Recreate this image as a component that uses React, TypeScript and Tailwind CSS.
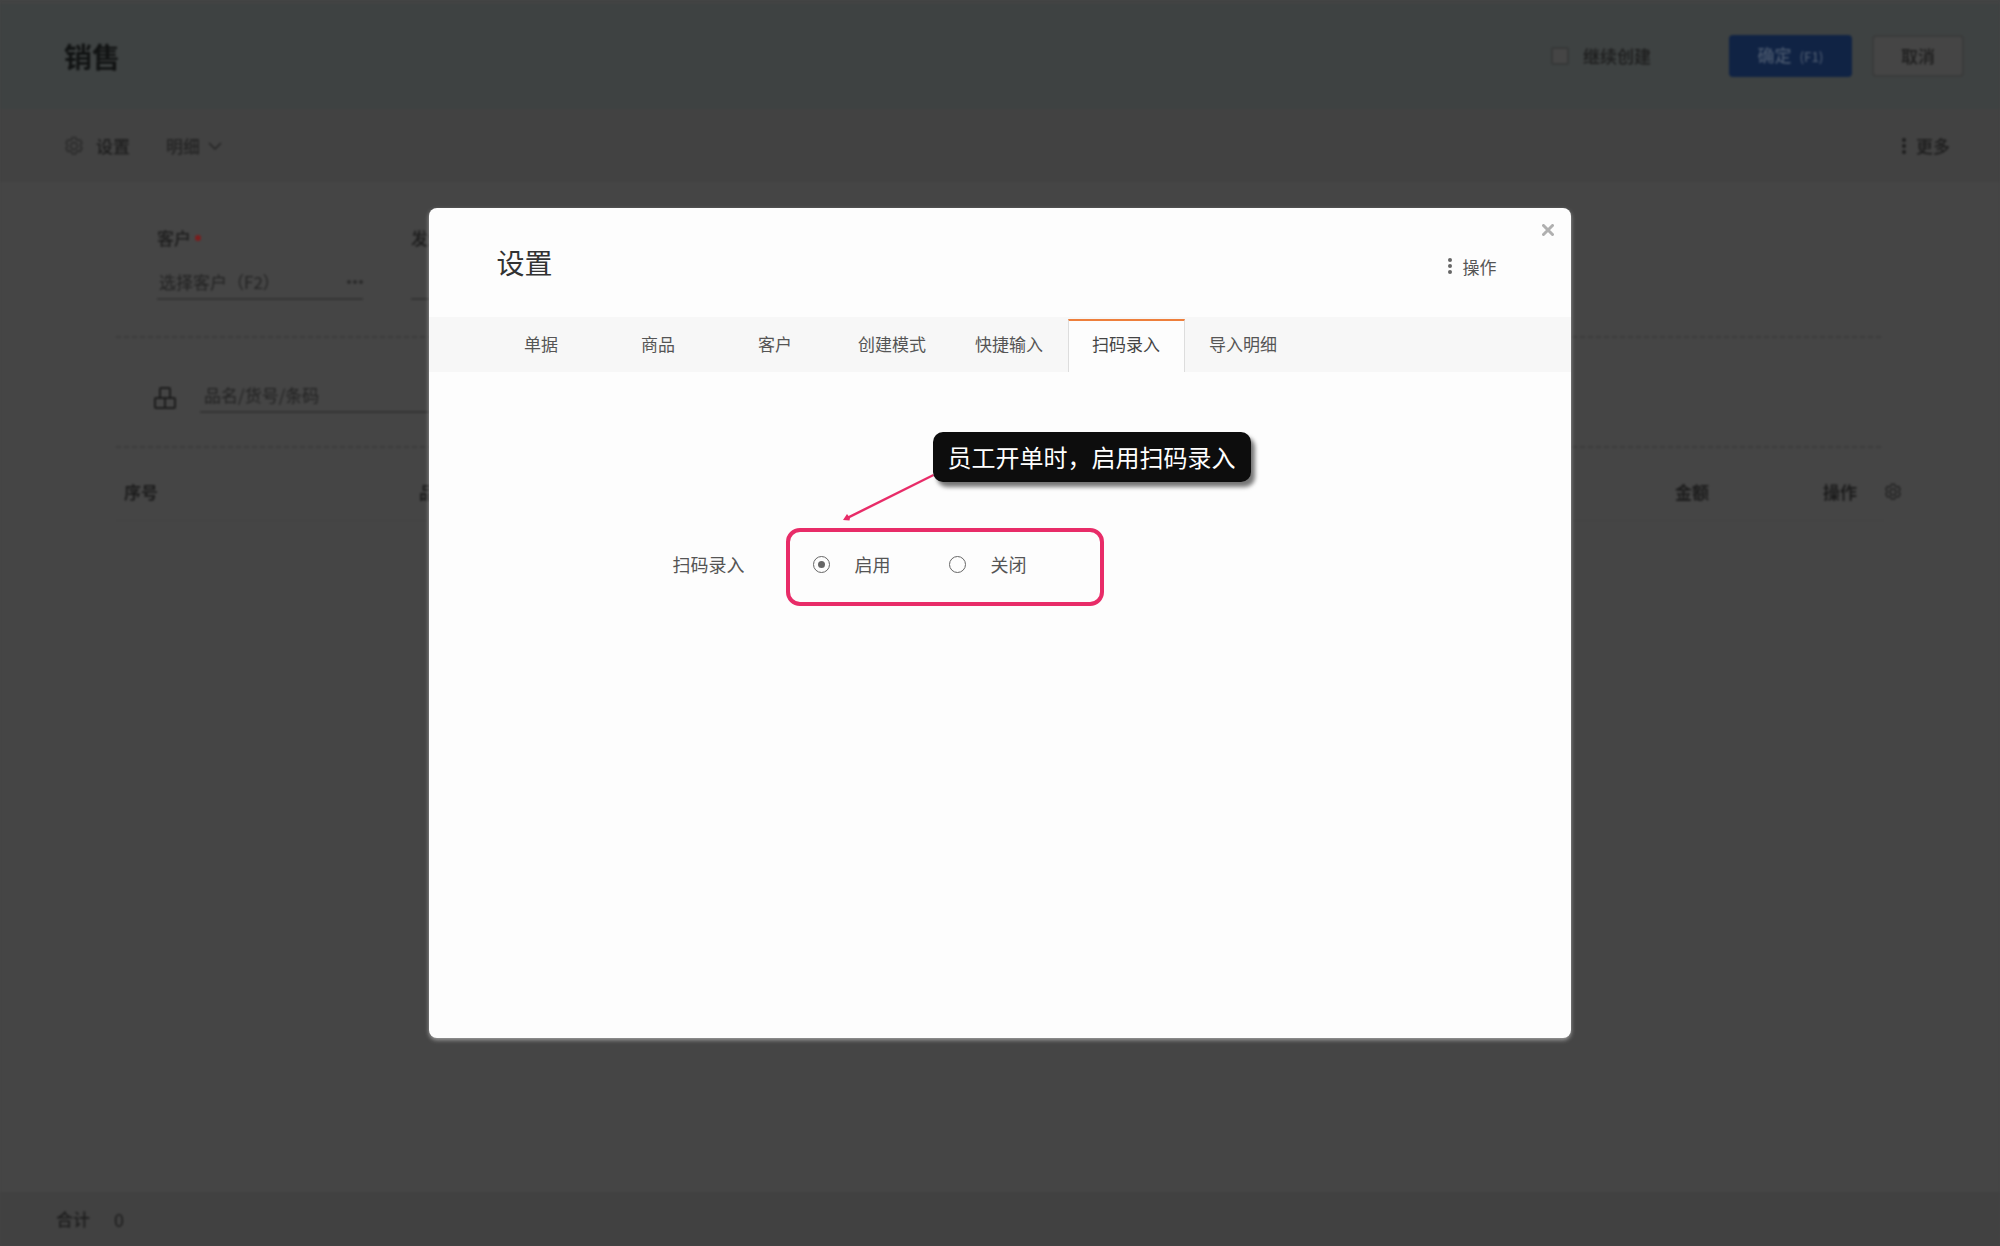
import { useState } from "react";

const tabs = ["单据", "商品", "客户", "创建模式", "快捷输入", "扫码录入", "导入明细"];

function Gear({ className }: { className: string }) {
  return (
    <svg viewBox="0 0 24 24" className={className} fill="none" stroke="currentColor" strokeWidth="2" aria-hidden="true">
      <circle cx="12" cy="12" r="4" />
      <path d="M9.8 1.8h4.4l.8 2.6 1.8 1 2.6-.8 2.2 3.6-1.8 2v2.6l1.8 2-2.2 3.8-2.6-.8-1.8 1-.8 2.6H9.8l-.8-2.6-1.8-1-2.600.8-2.200-3.800 1.800-2v-2.600l-1.800-2 2.200-3.600 2.600.8 1.800-1z" strokeLinejoin="round" />
    </svg>
  );
}

function Dots({ className }: { className: string }) {
  return (
    <svg viewBox="0 0 4 16" className={className} fill="currentColor" aria-hidden="true">
      <circle cx="2" cy="2" r="2" />
      <circle cx="2" cy="8" r="2" />
      <circle cx="2" cy="14" r="2" />
    </svg>
  );
}

function DashedRule() {
  return (
    <svg className="block h-[2px] w-full" aria-hidden="true">
      <line x1="0" y1="1" x2="100%" y2="1" stroke="#3c3c3c" strokeWidth="2" strokeDasharray="5 3" />
    </svg>
  );
}

function SalesPage() {
  return (
    <div className="flex h-full flex-col text-[17px] leading-6 text-[#1c1c1c] blur-[1px]" inert>
      <header className="flex h-[109px] shrink-0 items-center border-t-4 border-[#424343] bg-[#3e4242] pr-9 pb-[2px] pl-16">
        <h1 className="text-[28px] leading-10 font-bold text-[#111313]">销售</h1>
        <label className="ml-auto flex items-center gap-[14px] font-medium">
          <input type="checkbox" className="size-[18px] appearance-none rounded-xs border-2 border-[#363838] bg-[#454545]" />
          继续创建
        </label>
        <button type="button" className="ml-[78px] h-[42px] w-[123px] rounded bg-[#102344] font-medium text-[#4a586e]">
          确定 <span className="pl-1 text-[13px]">(F1)</span>
        </button>
        <button type="button" className="ml-5 h-[42px] w-[92px] rounded border-2 border-[#3a3b3b] bg-[#454545] font-medium">
          取消
        </button>
      </header>
      <nav className="flex h-[73px] shrink-0 items-center bg-[#424242] pr-[50px] pl-16">
        <button type="button" className="flex items-center gap-3 font-medium">
          <Gear className="size-5 text-[#2c2c2c]" />
          设置
        </button>
        <button type="button" className="ml-9 flex items-center gap-2 font-medium text-[#242424]">
          明细
          <svg viewBox="0 0 14 8" className="w-[14px]" fill="none" stroke="currentColor" strokeWidth="1.5" aria-hidden="true">
            <path d="M1 1l6 6 6-6" />
          </svg>
        </button>
        <button type="button" className="ml-auto flex items-center gap-[10px] font-medium">
          <Dots className="h-4" />
          更多
        </button>
      </nav>
      <main className="flex-1 bg-[#454545] px-[116px]">
        <div className="flex gap-12 px-[41px] pt-[44px]">
          <div className="w-[206px]">
            <label htmlFor="customer" className="flex items-center gap-1 font-medium">
              客户<i className="size-[6px] rounded-full bg-[#7c1c1c]" />
            </label>
            <div className="mt-5 flex items-center border-b-2 border-[#343434] pb-1">
              <input id="customer" placeholder="选择客户（F2）" className="min-w-0 flex-1 px-[2px] placeholder:text-[#222]" />
              <button type="button" aria-label="选择客户" className="flex gap-[2px]">
                <i className="size-1 rounded-full bg-[#2a2a2a]" />
                <i className="size-1 rounded-full bg-[#2a2a2a]" />
                <i className="size-1 rounded-full bg-[#2a2a2a]" />
              </button>
            </div>
          </div>
          <div className="w-[206px]">
            <label htmlFor="date" className="font-medium">发生日期</label>
            <input id="date" className="mt-5 w-full border-b-2 border-[#343434] pb-1" />
          </div>
        </div>
        <div className="mt-9">
          <DashedRule />
          <div className="flex items-center px-[38px] pt-[45px] pb-[33px]">
            <svg viewBox="0 0 22 22" className="size-[22px]" fill="none" stroke="currentColor" strokeWidth="2" aria-hidden="true">
              <rect x="6" y="1" width="10" height="10" rx="1" />
              <rect x="1" y="11" width="10" height="10" rx="1" />
              <rect x="11" y="11" width="10" height="10" rx="1" />
            </svg>
            <input aria-label="品名/货号/条码" placeholder="品名/货号/条码" className="ml-6 w-[400px] border-b-2 border-[#343434] px-1 pb-1 placeholder:text-[#222]" />
          </div>
          <DashedRule />
        </div>
        <div className="flex items-center">
          <table className="w-full shrink-0 table-fixed border-b border-[#414141] text-left">
            <thead>
              <tr className="h-[72px]">
                <th className="w-[295px] px-2 pt-4 font-bold">序号</th>
                <th className="px-2 pt-4 font-bold">品名</th>
                <th className="w-[176px] pt-4 text-right font-bold">金额</th>
                <th className="w-[175px] pt-4 pr-[27px] text-right font-bold">操作</th>
              </tr>
            </thead>
          </table>
          <button type="button" aria-label="列设置" className="mt-4">
            <Gear className="size-[18px] text-[#242424]" />
          </button>
        </div>
      </main>
      <footer className="flex h-[54px] shrink-0 items-center gap-6 bg-[#414141] px-14">
        <span className="font-medium">合计</span>
        <span className="text-lg">0</span>
      </footer>
    </div>
  );
}

export default function App() {
  const [tab, setTab] = useState("扫码录入");
  const [scan, setScan] = useState("启用");

  return (
    <div className="relative h-screen overflow-hidden bg-[#454545] font-['Noto_Sans_CJK_SC',sans-serif]">
      <SalesPage />
      <div className="absolute inset-0 flex items-center justify-center">
        <section role="dialog" aria-modal="true" aria-labelledby="dialog-title" className="relative flex h-2/3 w-4/7 flex-col rounded-lg bg-[#fdfdfd] text-[17px] leading-6 text-[#555] shadow-[0_2px_4px_#a0a0a0]">
          <button type="button" aria-label="关闭窗口" className="absolute top-[15px] right-4 text-[#b0b0b0]">
            <svg viewBox="0 0 12 12" className="m-[1px] size-3" stroke="currentColor" strokeWidth="3" strokeLinecap="round" aria-hidden="true">
              <path d="M1.5 1.5l9 9M10.5 1.5l-9 9" />
            </svg>
          </button>
          <header className="flex h-[109px] shrink-0 items-center justify-between pr-[75px] pl-[68px]">
            <h2 id="dialog-title" className="text-[28px] leading-10 text-[#333]">设置</h2>
            <button type="button" className="mt-[10px] flex items-center gap-[10px]">
              <Dots className="mb-[2px] h-4 text-[#666]" />
              操作
            </button>
          </header>
          <div role="tablist" className="flex h-[55px] shrink-0 bg-[#f7f7f7] px-[54px] pt-[2px]">
            {tabs.map((name) => (
              <button
                key={name}
                type="button"
                role="tab"
                aria-selected={tab === name}
                onClick={() => setTab(name)}
                className={
                  tab === name
                    ? "w-[117px] border-x border-t-2 border-x-[#ddd] border-t-[#ee7f3c] bg-[#fdfdfd] pb-1 text-[#444]"
                    : "w-[117px] border-x border-t-2 border-transparent pb-1"
                }
              >
                {name}
              </button>
            ))}
          </div>
          <div role="radiogroup" aria-labelledby="scan-label" className="flex items-center pt-[180px] pl-[244px] text-[18px]">
            <span id="scan-label">扫码录入</span>
            <div className="relative ml-[68px] flex gap-[58px]">
              {["启用", "关闭"].map((name) => (
                <label key={name} className="flex items-center gap-[25px]">
                  <input
                    type="radio"
                    name="scan"
                    checked={scan === name}
                    onChange={() => setScan(name)}
                    className="mt-[2px] grid size-[17px] appearance-none place-items-center rounded-full border border-[#666] before:size-[7px] before:rounded-full checked:before:bg-[#666]"
                  />
                  {name}
                </label>
              ))}
              <div className="pointer-events-none absolute -top-6 -left-[27px] h-[78px] w-[318px] rounded-[14px] border-4 border-[#e82c68]" />
              <svg viewBox="0 0 92 48" className="absolute -top-[79px] left-[29px] w-[92px]" fill="#e82c68" aria-hidden="true">
                <path d="M91 1L92 3 8 45 7.5 47.5 1 47 5 41 6.5 43z" />
              </svg>
              <div role="tooltip" className="absolute -top-[120px] left-[120px] rounded-[10px] bg-[#0d0d0d] px-[15px] py-[9px] text-2xl leading-8 whitespace-nowrap text-white shadow-[4px_5px_4px_#777]">
                员工开单时，启用扫码录入
              </div>
            </div>
          </div>
        </section>
      </div>
    </div>
  );
}
